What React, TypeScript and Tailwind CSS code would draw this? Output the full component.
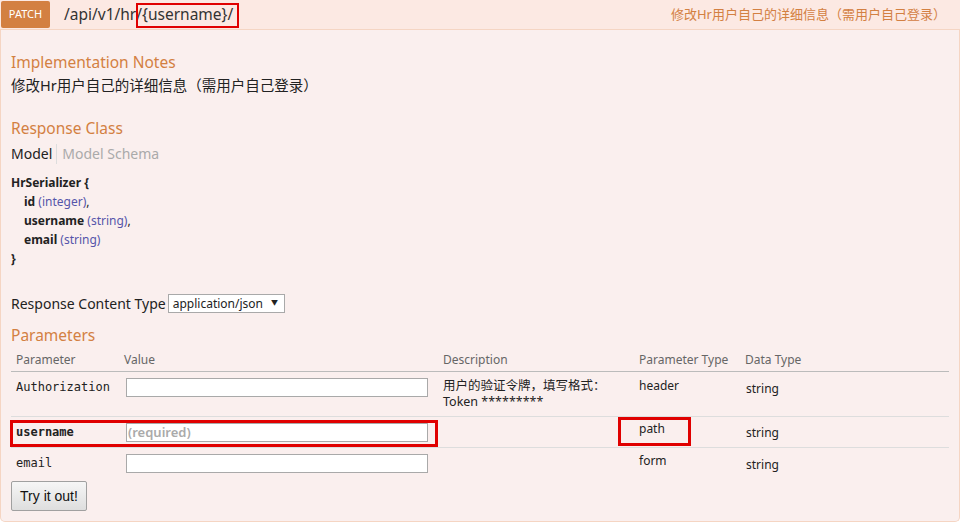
import React from "react";

const sans = { fontFamily: '"Noto Sans", "Noto Sans CJK SC", sans-serif' };
const mono = { fontFamily: '"DejaVu Sans Mono", monospace' };
const cols = "grid grid-cols-[110px_318px_196px_106px_208px]";

export default function App() {
  return (
    <div className="w-[960px] h-[524px] bg-white text-[#333]" style={sans}>
      {/* Header */}
      <div className="relative h-[30px] bg-[#fce9e3] border-b border-[#f5d5c3] flex items-center pl-[1px] pr-[14px]">
        <span className="w-[49px] h-[27px] rounded-[2px] bg-[#d38042] text-white text-[11px] flex items-center justify-center">
          PATCH
        </span>
        <span className="ml-[14px] text-[15.5px] text-[#333]">{"/api/v1/hr/{username}/"}</span>
        <span className="ml-auto text-[13px] text-[#d38042]">修改Hr用户自己的详细信息（需用户自己登录）</span>
        <div className="absolute left-[136px] top-[3px] w-[103px] h-[25px] border-2 border-[#e00000]" />
      </div>

      {/* Content */}
      <div className="h-[492px] bg-[#faefee] border border-t-0 border-[#f5d5c3] rounded-b-[5px] px-[10px] pt-[20px]">
        <h4 className="text-[15.5px] leading-[24px] text-[#d38042]">Implementation Notes</h4>
        <p className="text-[14.5px] leading-[20px] text-[#222] mt-[1px]">修改Hr用户自己的详细信息（需用户自己登录）</p>

        <h4 className="text-[15.5px] leading-[24px] text-[#d38042] mt-[21px]">Response Class</h4>
        <div className="flex items-center text-[14px] leading-[20px] mt-[4px]">
          <span className="text-[#222] pr-[4px] border-r border-[#ddd]">Model</span>
          <span className="text-[#aaa] pl-[5px]">Model Schema</span>
        </div>

        <div className="text-[12px] leading-[19px] mt-[9px] text-[#222]">
          <div className="font-bold">HrSerializer {"{"}</div>
          <div className="pl-[13px]">
            <span className="font-bold">id</span> <span className="text-[#55a]">(integer)</span>,
          </div>
          <div className="pl-[13px]">
            <span className="font-bold">username</span> <span className="text-[#55a]">(string)</span>,
          </div>
          <div className="pl-[13px]">
            <span className="font-bold">email</span> <span className="text-[#55a]">(string)</span>
          </div>
          <div className="font-bold">{"}"}</div>
        </div>

        <div className="flex items-center mt-[25px] text-[14px] text-[#222]">
          <span>Response Content Type</span>
          <span className="ml-[2px] h-[19px] bg-white border border-[#a9a9a9] text-[12px] flex items-center pl-[4px] pr-[6px] gap-[8px]">
            application/json <span className="text-[7px]">▼</span>
          </span>
        </div>

        <h4 className="text-[15.5px] leading-[24px] text-[#d38042] mt-[9px]">Parameters</h4>

        <div className="mt-[4px] text-[12px]">
          <div className={`${cols} border-b border-[#bbb] text-[#666] pb-[2px]`}>
            <div className="pl-[5px]">Parameter</div>
            <div className="pl-[3px]">Value</div>
            <div className="pl-[4px]">Description</div>
            <div className="pl-[4px]">Parameter Type</div>
            <div className="pl-[4px]">Data Type</div>
          </div>

          <div className={`${cols} border-b border-[#ddd] text-[#222] pt-[6px] pb-[6px]`}>
            <div className="pl-[5px] text-[12px] leading-[16px] pt-[1px]" style={mono}>Authorization</div>
            <div className="pl-[5px]">
              <div className="w-[302px] h-[19px] bg-white border border-[#a9a9a9]" />
            </div>
            <div className="pl-[4px] leading-[16px] text-[12.5px]">
              <div>用户的验证令牌，填写格式：</div>
              <div>Token *********</div>
            </div>
            <div className="pl-[4px] leading-[16px]">header</div>
            <div className="pl-[5px] pt-[2px]">string</div>
          </div>

          <div className={`relative ${cols} border-b border-[#ddd] text-[#222] pt-[6px] pb-[5px]`}>
            <div className="absolute left-[-1px] top-[3px] w-[428px] h-[27px] border-[3px] border-[#e00000]" />
            <div className="absolute left-[607px] top-[0px] w-[73px] h-[29px] border-[3px] border-[#e00000]" />
            <div className="pl-[5px] text-[12px] leading-[16px] font-bold pt-[1px]" style={mono}>username</div>
            <div className="pl-[5px]">
              <div className="w-[302px] h-[19px] bg-white border border-[#a9a9a9] text-[13px] text-[#aaa] font-semibold pl-[1px] leading-[17px]">
                (required)
              </div>
            </div>
            <div />
            <div className="pl-[4px] leading-[16px] -mt-[2px]">path</div>
            <div className="pl-[5px] pt-[1px]">string</div>
          </div>

          <div className={`${cols} text-[#222] pt-[6px]`}>
            <div className="pl-[5px] text-[12px] leading-[16px] pt-[1px]" style={mono}>email</div>
            <div className="pl-[5px]">
              <div className="w-[302px] h-[19px] bg-white border border-[#a9a9a9]" />
            </div>
            <div />
            <div className="pl-[4px] leading-[16px] -mt-[1px]">form</div>
            <div className="pl-[5px] pt-[2px]">string</div>
          </div>
        </div>

        <button
          className="mt-[7px] w-[76px] h-[30px] border border-[#a0a0a0] rounded-[2px] bg-gradient-to-b from-[#f6f6f6] to-[#dedede] text-[14px] text-[#111]"
          style={{ fontFamily: '"Liberation Sans", Arial, sans-serif' }}
        >
          Try it out!
        </button>
      </div>
    </div>
  );
}
